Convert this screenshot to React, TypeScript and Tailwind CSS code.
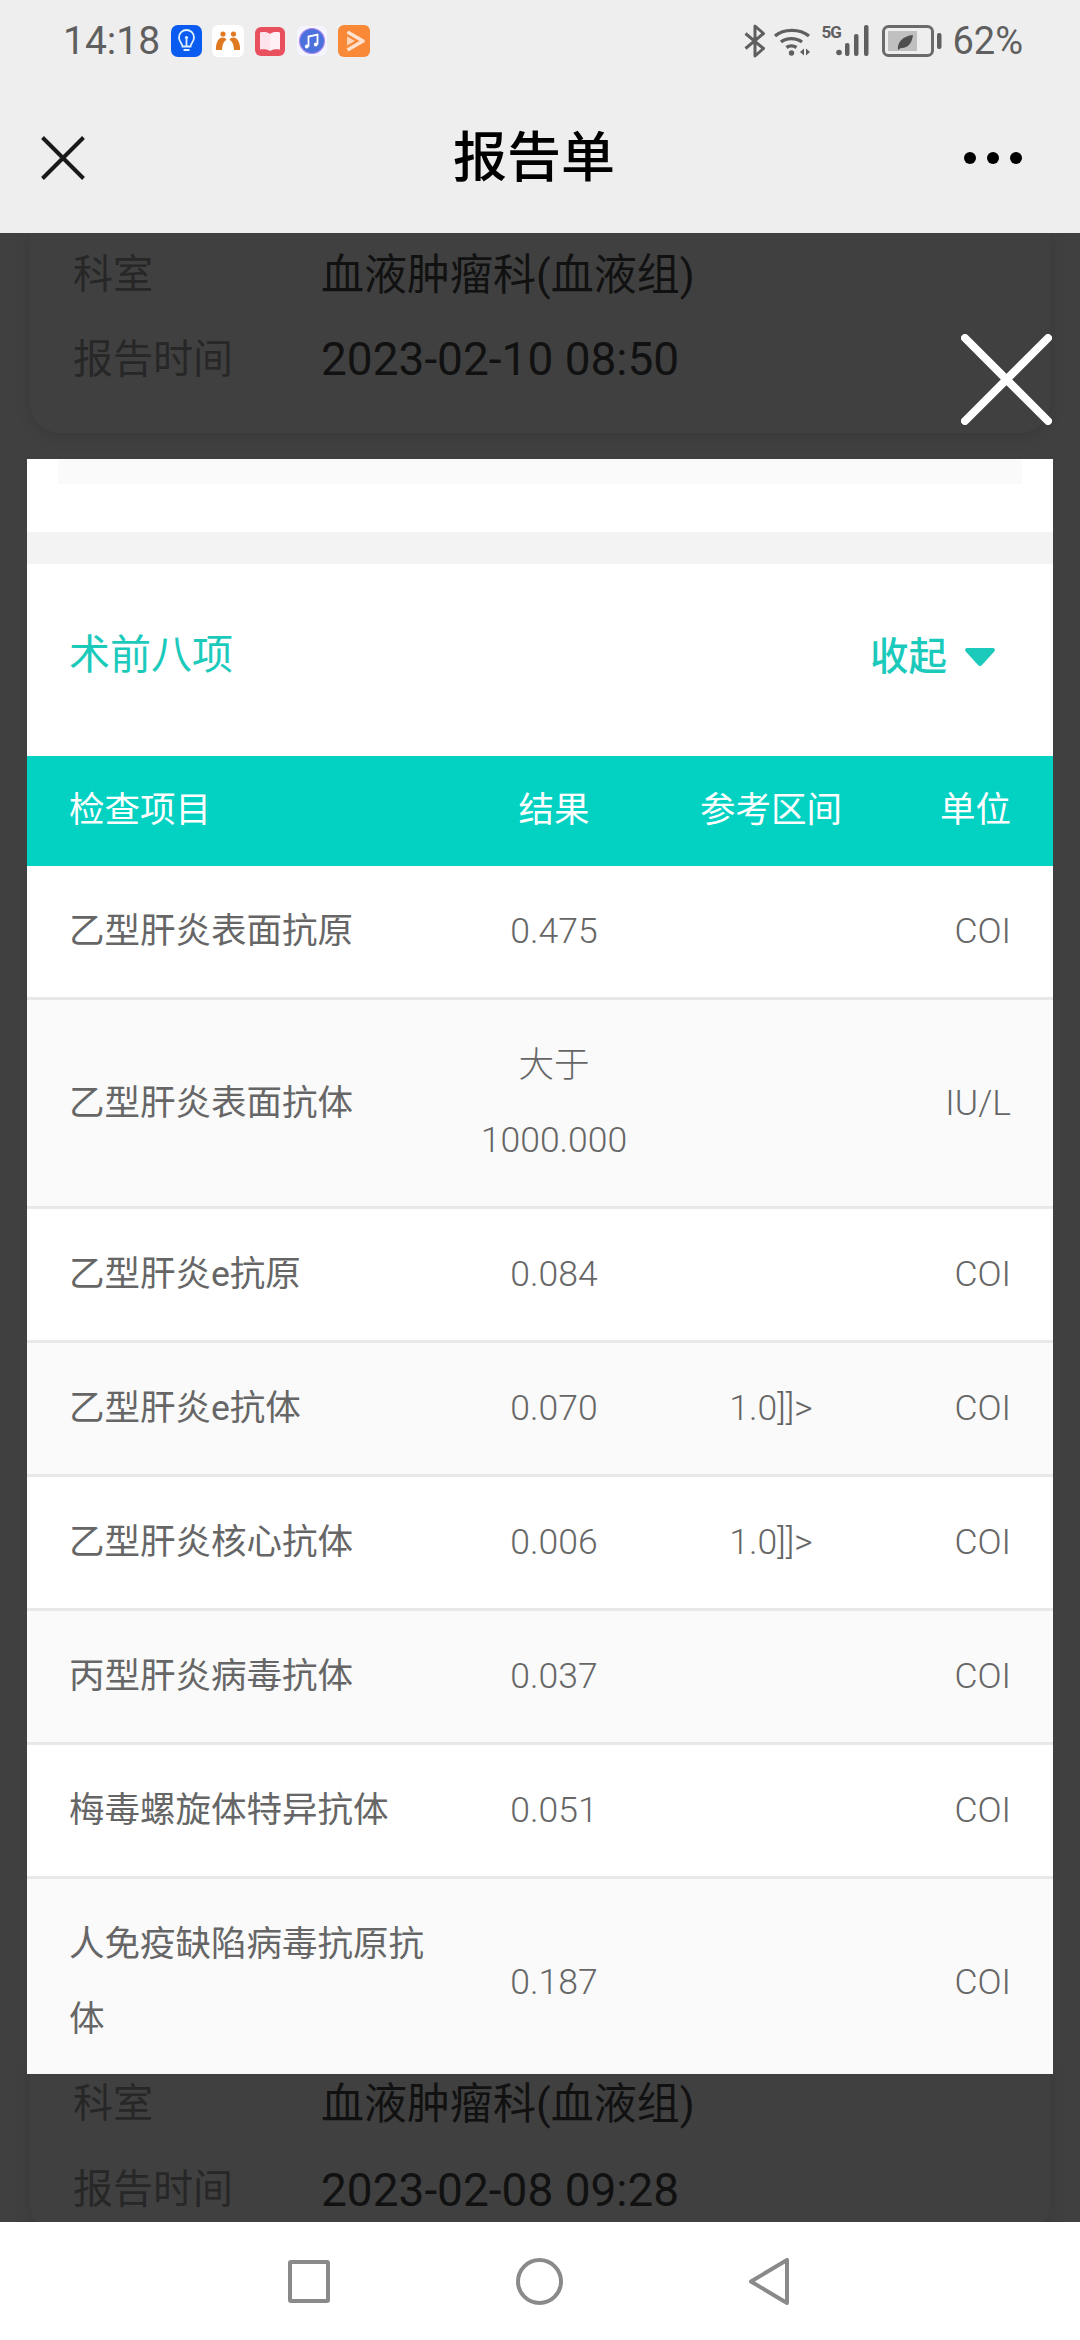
const rows = [
  { name: "乙型肝炎表面抗原", result: "0.475", range: "", unit: "COI" },
  { name: "乙型肝炎表面抗体", result: "大于\n1000.000", range: "", unit: "IU/L" },
  { name: "乙型肝炎e抗原", result: "0.084", range: "", unit: "COI" },
  { name: "乙型肝炎e抗体", result: "0.070", range: "1.0]]>", unit: "COI" },
  { name: "乙型肝炎核心抗体", result: "0.006", range: "1.0]]>", unit: "COI" },
  { name: "丙型肝炎病毒抗体", result: "0.037", range: "", unit: "COI" },
  { name: "梅毒螺旋体特异抗体", result: "0.051", range: "", unit: "COI" },
  { name: "人免疫缺陷病毒抗原抗体", result: "0.187", range: "", unit: "COI" },
]

function StatusIcons() {
  return (
    <div className="ml-[11px] flex items-center">
      <svg width="31" height="32" viewBox="0 0 31 32" className="rounded-[7px] bg-[#0a5cf0]">
        <path d="M11.5 21.5c0-3-3.5-4.5-3.5-9a7.5 7.5 0 0 1 15 0c0 4.500-3.500 6-3.500 9z" fill="none" stroke="#dff0ff" strokeWidth="1.800" />
        <path d="M15.500 21v-7M12.500 25h6" fill="none" stroke="#dff0ff" strokeWidth="1.800" />
        <circle cx="15.500" cy="12.500" r="1.600" fill="#dff0ff" />
      </svg>
      <svg width="32" height="32" viewBox="0 0 32 32" className="ml-[10px] rounded-[6px] bg-white">
        <circle cx="11" cy="9" r="2.600" fill="#e07a22" />
        <circle cx="21.500" cy="9" r="2.600" fill="#e07a22" />
        <path d="M4 25c-.5-6 2-12 6-12.500 2.500-.3 4 .8 4.500 2.500-2.500 1-4 3.500-4.500 10z" fill="#e07a22" />
        <path d="M28 25c.5-6-2-12-6-12.500-2.500-.3-4 .8-4.500 2.500 2.500 1 4 3.500 4.500 10z" fill="#e07a22" />
      </svg>
      <svg width="30" height="29" viewBox="0 0 30 29" className="ml-[11px] rounded-[6px] bg-[#e8505e]">
        <path d="M5 5.500c4-1 7.500-.5 10 1.500v17c-2.500-1.800-6-2.300-10-1.500z" fill="#fde3ec" />
        <path d="M25 5.500c-4-1-7.500-.5-10 1.500v17c2.500-1.800 6-2.300 10-1.500z" fill="#fff0f5" />
      </svg>
      <svg width="30" height="30" viewBox="0 0 30 30" className="ml-[12px] rounded-[6px] bg-[#f4f5fe]">
        <circle cx="15" cy="15" r="12.500" fill="#4c70dc" stroke="#b08cf0" strokeWidth="1.200" />
        <path d="M11.500 20.500V10.500l9-2v10" fill="none" stroke="#fff" strokeWidth="1.800" />
        <circle cx="9.800" cy="20.500" r="1.900" fill="#fff" />
        <circle cx="18.800" cy="18.500" r="1.900" fill="#fff" />
      </svg>
      <svg width="32" height="32" viewBox="0 0 32 32" className="ml-[11px] rounded-[6px] bg-[#f98837]">
        <path d="M9.500 7l15.500 9-15.500 9" fill="none" stroke="#ffe3d0" strokeWidth="3.600" strokeLinejoin="round" />
        <path d="M9 11.500l8 4.500-8 4.500z" fill="#ffd5b8" />
      </svg>
    </div>
  )
}

function SystemIcons() {
  return (
    <div className="flex items-center">
      <svg width="21" height="34" viewBox="0 0 21 34" fill="none" stroke="#5f5f5f" strokeWidth="3">
        <path d="M1.500 9.500l18 15-8.500 7.500V2l8.500 7.500-18 15" strokeLinejoin="round" />
      </svg>
      <svg width="38" height="32" viewBox="0 0 38 32" className="ml-[8px]" fill="none" stroke="#5f5f5f" strokeWidth="3.400">
        <path d="M2 11c8.500-7.500 25-7.500 34 0" />
        <path d="M8 17c5.500-4.500 15-4.500 21 0" />
        <path d="M13.500 22.500c2.800-2 7-2 10 0" />
        <circle cx="18.500" cy="28" r="2.700" fill="#5f5f5f" stroke="none" />
        <path d="M27 27l4-3.500v7zM33 23.500l4 3.500-4 3.500z" fill="#5f5f5f" stroke="none" />
      </svg>
      <div className="relative ml-[10px] h-[32px] w-[49px]">
        <span className="absolute left-0 top-[-3px] text-[17px] font-bold leading-[20px] tracking-[-1px] text-[#5f5f5f] font-['Roboto',sans-serif]">5G</span>
        <svg width="34" height="31" viewBox="0 0 34 31" className="absolute right-0 top-0" fill="#5f5f5f">
          <circle cx="3" cy="27.500" r="2.800" />
          <rect x="9" y="18" width="4.500" height="13" rx="2" />
          <rect x="18" y="9" width="4.500" height="22" rx="2" />
          <rect x="28" y="0" width="4.500" height="31" rx="2" />
        </svg>
      </div>
      <svg width="60" height="32" viewBox="0 0 60 32" className="ml-[12px]" fill="none">
        <rect x="1.500" y="1.500" width="49" height="29" rx="5" stroke="#6a6a6a" strokeWidth="3" />
        <rect x="6" y="6" width="29" height="20" fill="#c0c0c0" />
        <path d="M16 25c-1-8 5-14 15-15-1 8-5 13-11 13-1 0-2 0-2.500 1z" fill="#4f4f4f" />
        <rect x="55" y="8" width="4.500" height="16" rx="2" fill="#5f5f5f" />
      </svg>
    </div>
  )
}

function BackgroundCard({ time, className }: { time: string; className: string }) {
  return (
    <div className={`mx-[30px] flex flex-col justify-end rounded-b-[30px] shadow-[0_4px_16px_rgba(0,0,0,0.12)] ${className}`}>
      <div className="flex h-[86px] items-center pl-[43px]">
        <span className="w-[248px] text-[40px] text-[#272727]">科室</span>
        <span className="text-[43px] text-[#111111]">血液肿瘤科(血液组)</span>
      </div>
      <div className="flex h-[86px] items-center pl-[43px]">
        <span className="w-[248px] text-[40px] text-[#272727]">报告时间</span>
        <span className="text-[46px] text-[#111111]">{time}</span>
      </div>
    </div>
  )
}

export default function App() {
  return (
    <div className="flex h-[2340px] w-[1080px] flex-col overflow-hidden bg-white font-['Roboto','Noto_Sans_CJK_SC',sans-serif]">
      <div className="h-[233px] shrink-0 bg-[#eeeeee]">
        <div className="flex h-[82px] items-center justify-between pl-[63px] pr-[57px]">
          <div className="flex items-center">
            <span className="text-[39px] leading-none text-[#5f5f5f]">14:18</span>
            <StatusIcons />
          </div>
          <div className="flex items-center">
            <SystemIcons />
            <span className="ml-[10px] text-[38px] leading-none text-[#5f5f5f]">62%</span>
          </div>
        </div>
        <div className="relative flex h-[151px] items-center justify-between pl-[41px] pr-[58px]">
          <svg width="44" height="44" viewBox="0 0 44 44" stroke="#1a1a1a" strokeWidth="4">
            <path d="M1.500 1.500l41 41M42.500 1.500l-41 41" />
          </svg>
          <span className="absolute left-[453px] top-[50px] text-[54px] font-medium leading-none text-black">报告单</span>
          <div className="flex gap-[11px]">
            <div className="h-[12px] w-[12px] rounded-full bg-black" />
            <div className="h-[12px] w-[12px] rounded-full bg-black" />
            <div className="h-[12px] w-[12px] rounded-full bg-black" />
          </div>
        </div>
      </div>

      <div className="relative h-[1989px] shrink-0 overflow-hidden bg-[#404040]">
        <BackgroundCard time="2023-02-10 08:50" className="h-[200px] pb-[31px]" />
        <BackgroundCard time="2023-02-08 09:28" className="mt-[1628px] h-[172px]" />

        <svg width="91" height="91" viewBox="0 0 91 91" className="absolute left-[961px] top-[101px]" stroke="#ffffff" strokeWidth="8" strokeLinecap="round">
          <path d="M4 4l83 83M87 4L4 87" />
        </svg>

        <div className="absolute left-[27px] top-[226px] h-[1615px] w-[1026px] overflow-hidden bg-white">
          <div className="mx-[31px] h-[25px] bg-[#fafafa]" />
          <div className="h-[48px]" />
          <div className="h-[32px] bg-[#f3f3f3]" />
          <div className="flex h-[192px] items-center justify-between pb-[8px] pl-[42px] pr-[58px] text-[#1ccabc]">
            <span className="text-[41px]">术前八项</span>
            <div className="mt-[2px] flex items-center">
              <span className="text-[38.500px] font-medium">收起</span>
              <svg width="30" height="18" viewBox="0 0 30 18" className="ml-[18px]" fill="#1ccabc">
                <path d="M2 0h26a2 2 0 0 1 1.500 3.200L17 17a2.500 2.500 0 0 1-4 0L.5 3.200A2 2 0 0 1 2 0z" />
              </svg>
            </div>
          </div>
          <div className="grid h-[110px] grid-cols-[361px_248px_186px_147px] items-center bg-[#03d2c3] pl-[42px] text-[35.500px] text-white">
            <span>检查项目</span>
            <span className="text-center">结果</span>
            <span className="text-center">参考区间</span>
            <span className="text-right">单位</span>
          </div>
          {rows.map((r, i) => (
            <div
              key={r.name}
              className={`grid grid-cols-[361px_248px_186px_147px] items-center border-b-[3px] border-[#e8e8e8] py-[28px] pl-[42px] text-[35.500px] leading-[75px] text-[#666666] ${i % 2 === 0 ? "bg-white" : "bg-[#fafafa]"}`}
            >
              <span>{r.name}</span>
              <span className="whitespace-pre-line text-center font-light">{r.result}</span>
              <span className="text-center font-light">{r.range}</span>
              <span className="text-right font-light">{r.unit}</span>
            </div>
          ))}
        </div>
      </div>

      <div className="flex h-[118px] shrink-0 items-center bg-white pl-[288px]">
        <div className="h-[43px] w-[42px] rounded-[3px] border-[4px] border-[#8a8a8a]" />
        <div className="ml-[186px] h-[47px] w-[47px] rounded-full border-[4px] border-[#8a8a8a]" />
        <svg width="40" height="47" viewBox="0 0 40 47" className="ml-[186px]" fill="none" stroke="#8a8a8a" strokeWidth="4" strokeLinejoin="round">
          <path d="M38 2v43L2 23.500z" />
        </svg>
      </div>
    </div>
  )
}
